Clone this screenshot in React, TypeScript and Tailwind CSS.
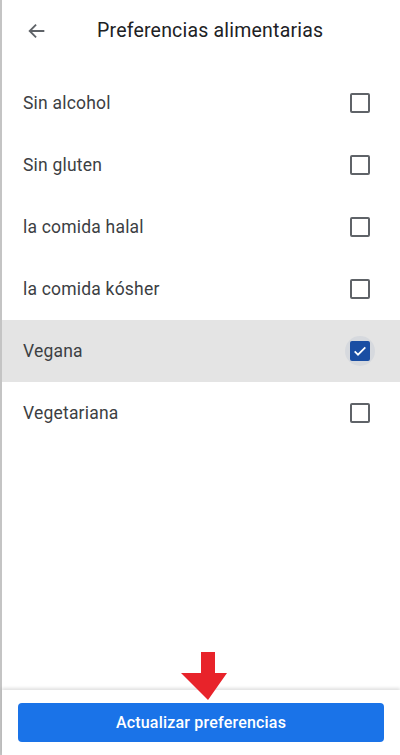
import React, { useState } from 'react';

const options = [
  'Sin alcohol',
  'Sin gluten',
  'la comida halal',
  'la comida kósher',
  'Vegana',
  'Vegetariana',
];

const Checkbox: React.FC<{ checked: boolean }> = ({ checked }) =>
  checked ? (
    <div className="w-[30px] h-[30px] rounded-full bg-[#d6d9de] flex items-center justify-center">
      <div className="w-[20px] h-[20px] rounded-[2px] bg-[#1a4ea3] flex items-center justify-center">
        <svg width="16" height="16" viewBox="0 0 24 24" fill="none" stroke="white" strokeWidth="2.6">
          <path d="M4 12.5l5 5L20 6.5" />
        </svg>
      </div>
    </div>
  ) : (
    <div className="w-[30px] h-[30px] flex items-center justify-center">
      <div className="w-[20px] h-[20px] rounded-[2px] border-2 border-[#5f6368]" />
    </div>
  );

const App: React.FC = () => {
  const [selected, setSelected] = useState<string[]>(['Vegana']);

  const toggle = (name: string) =>
    setSelected((prev) => (prev.includes(name) ? prev.filter((n) => n !== name) : [...prev, name]));

  return (
    <div className="w-[400px] h-[755px] flex flex-col bg-white border-l-2 border-[#c4c4c4] font-['Roboto',sans-serif]">
      {/* Header */}
      <div className="h-[72px] flex items-center pb-[10px]">
        <div className="w-[95px] pl-[24px] flex items-center">
          <svg width="22" height="22" viewBox="0 0 24 24" fill="none" stroke="#5f6368" strokeWidth="2">
            <path d="M20 12H4M11 5l-7 7 7 7" />
          </svg>
        </div>
        <h1 className="text-[19.5px] text-[#202124] tracking-[0.2px]">Preferencias alimentarias</h1>
      </div>

      {/* Options */}
      <div className="flex-1">
        {options.map((name) => {
          const checked = selected.includes(name);
          return (
            <div
              key={name}
              onClick={() => toggle(name)}
              className={`h-[62px] flex items-center justify-between pl-[21px] pr-[25px] ${checked ? 'bg-[#e4e4e4]' : ''}`}
            >
              <span className="text-[17.5px] text-[#3c4043] tracking-[0.2px]">{name}</span>
              <Checkbox checked={checked} />
            </div>
          );
        })}
      </div>

      {/* Footer */}
      <div className="relative h-[65px] shadow-[0_-2px_3px_rgba(0,0,0,0.12)] px-[16px] pt-[13px]">
        <svg
          className="absolute left-[178px] -top-[38px]"
          width="48"
          height="48"
          viewBox="0 0 48 48"
        >
          <path d="M22 0h14v21h12L29 48 2 21h20z" fill="#e8232a" transform="translate(-1 0)" />
        </svg>
        <button className="w-full h-[39px] rounded-[4px] bg-[#1a73e8] text-white text-[16px] font-medium tracking-[0.2px]">
          Actualizar preferencias
        </button>
      </div>
    </div>
  );
};

export default App;
